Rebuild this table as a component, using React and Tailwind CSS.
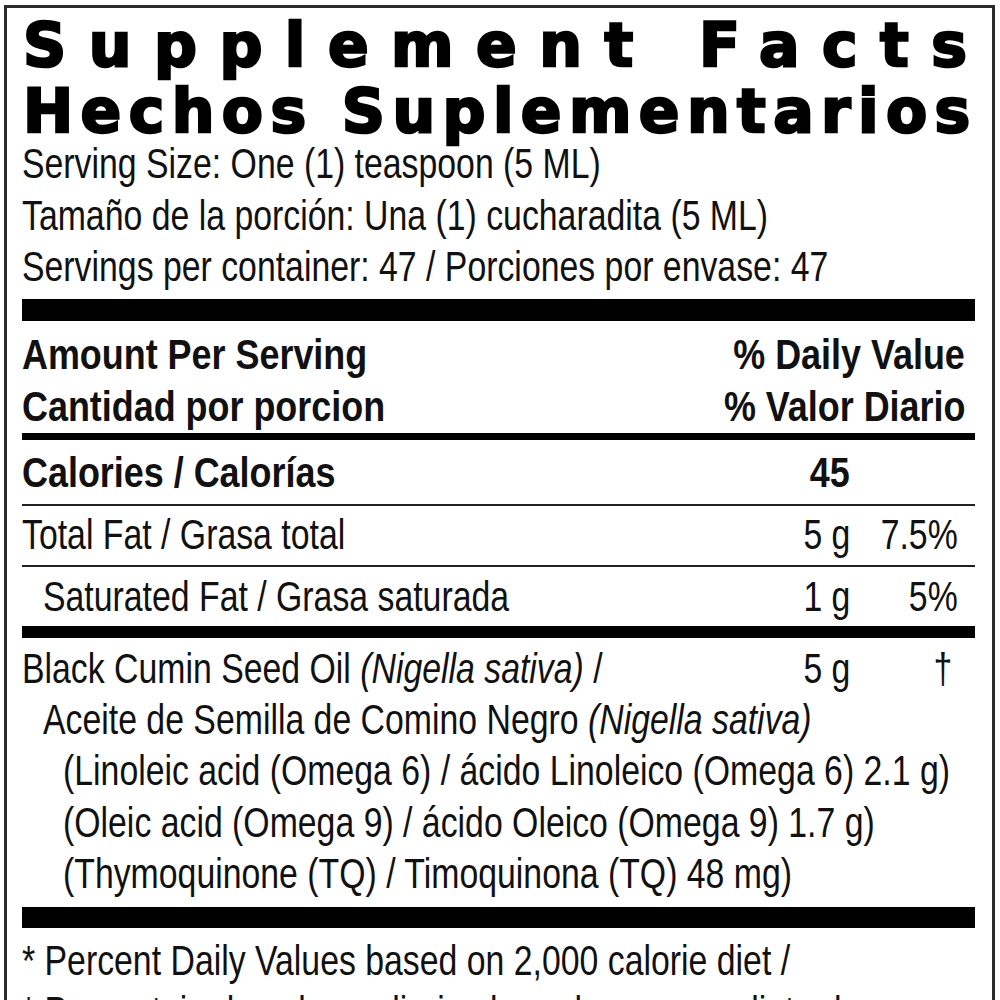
const sans = { fontFamily: '"Liberation Sans", Arial, sans-serif' };

// condensed look: Liberation Sans squeezed horizontally
const T = ({ children, right, bold }) => (
    <span
        className={`inline-block whitespace-nowrap ${right ? "origin-right" : "origin-left"} ${
            bold ? "scale-x-[0.855]" : "scale-x-[0.805]"
        }`}
    >
        {children}
    </span>
);

const Row = ({ label, amount, pct, bold, indent, pctPad = "pr-[17px]" }) => (
    <div className={`flex leading-[51px] ${bold ? "font-bold" : ""}`}>
        <div className={`flex-1 ${indent ? "pl-[21px]" : ""}`}>
            <T bold={bold}>{label}</T>
        </div>
        <div className="w-[100px] text-right">
            <T right bold={bold}>{amount}</T>
        </div>
        <div className={`w-[125px] text-right ${pctPad}`}>
            <T right>{pct}</T>
        </div>
    </div>
);

export default function App() {
    return (
        <div className="w-[1000px] h-[1000px] overflow-hidden bg-white text-black">
            <div className="ml-[4px] mt-[5px] w-[991px] border-[3px] border-[#2a2a2a] pl-[15px] pr-[17px] pt-[4px] pb-10">
                <div
                    className="text-[60px] leading-[66px] font-bold whitespace-nowrap [-webkit-text-stroke:2.5px_black]"
                    style={{ fontFamily: '"DejaVu Sans", sans-serif' }}
                >
                    <div className="tracking-[22.5px] pl-[1px]">Supplement Facts</div>
                    <div className="tracking-[7.4px] pl-[1px]">Hechos Suplementarios</div>
                </div>

                <div className="text-[42px] leading-[51.5px] text-[#111] -mt-[6px]" style={sans}>
                    <div><T>Serving Size: One (1) teaspoon (5 ML)</T></div>
                    <div><T>Tamaño de la porción: Una (1) cucharadita (5 ML)</T></div>
                    <div><T>Servings per container: 47 / Porciones por envase: 47</T></div>

                    <div className="h-[22px] bg-black mt-[6px]" />

                    <div className="flex justify-between font-bold leading-[52px] pt-[8px]">
                        <div>
                            <div><T bold>Amount Per Serving</T></div>
                            <div><T bold>Cantidad por porcion</T></div>
                        </div>
                        <div className="text-right pr-[10px]">
                            <div><T bold right>% Daily Value</T></div>
                            <div><T bold right>% Valor Diario</T></div>
                        </div>
                    </div>

                    <div className="h-[7px] bg-black" />
                    <div className="pt-[7px] pb-[6px]">
                        <Row label="Calories / Calorías" amount="45" bold />
                    </div>
                    <div className="h-[2px] bg-[#222]" />
                    <div className="pt-[3px] pb-[5px]">
                        <Row label="Total Fat / Grasa total" amount="5 g" pct="7.5%" />
                    </div>
                    <div className="h-[2px] bg-[#222]" />
                    <div className="pt-[4px] pb-[4px]">
                        <Row label="Saturated Fat / Grasa saturada" amount="1 g" pct="5%" indent />
                    </div>
                    <div className="h-[12px] bg-black" />

                    <div className="pt-[5px] pb-[7px]">
                        <Row
                            label={
                                <>
                                    Black Cumin Seed Oil <i>(Nigella sativa)</i> /
                                </>
                            }
                            amount="5 g"
                            pct="†"
                            pctPad="pr-[23px]"
                        />
                        <div className="pl-[21px]">
                            <T>
                                Aceite de Semilla de Comino Negro <i>(Nigella sativa)</i>
                            </T>
                        </div>
                        <div className="pl-[41px]">
                            <T>(Linoleic acid (Omega 6) / ácido Linoleico (Omega 6) 2.1 g)</T>
                        </div>
                        <div className="pl-[41px]">
                            <T>(Oleic acid (Omega 9) / ácido Oleico (Omega 9) 1.7 g)</T>
                        </div>
                        <div className="pl-[41px]">
                            <T>(Thymoquinone (TQ) / Timoquinona (TQ) 48 mg)</T>
                        </div>
                    </div>

                    <div className="h-[21px] bg-black" />
                    <div className="pt-[7px]">
                        <div><T>* Percent Daily Values based on 2,000 calorie diet /</T></div>
                        <div><T>* Porcentaje de valores diarios basados en una dieta de</T></div>
                    </div>
                </div>
            </div>
        </div>
    );
}
